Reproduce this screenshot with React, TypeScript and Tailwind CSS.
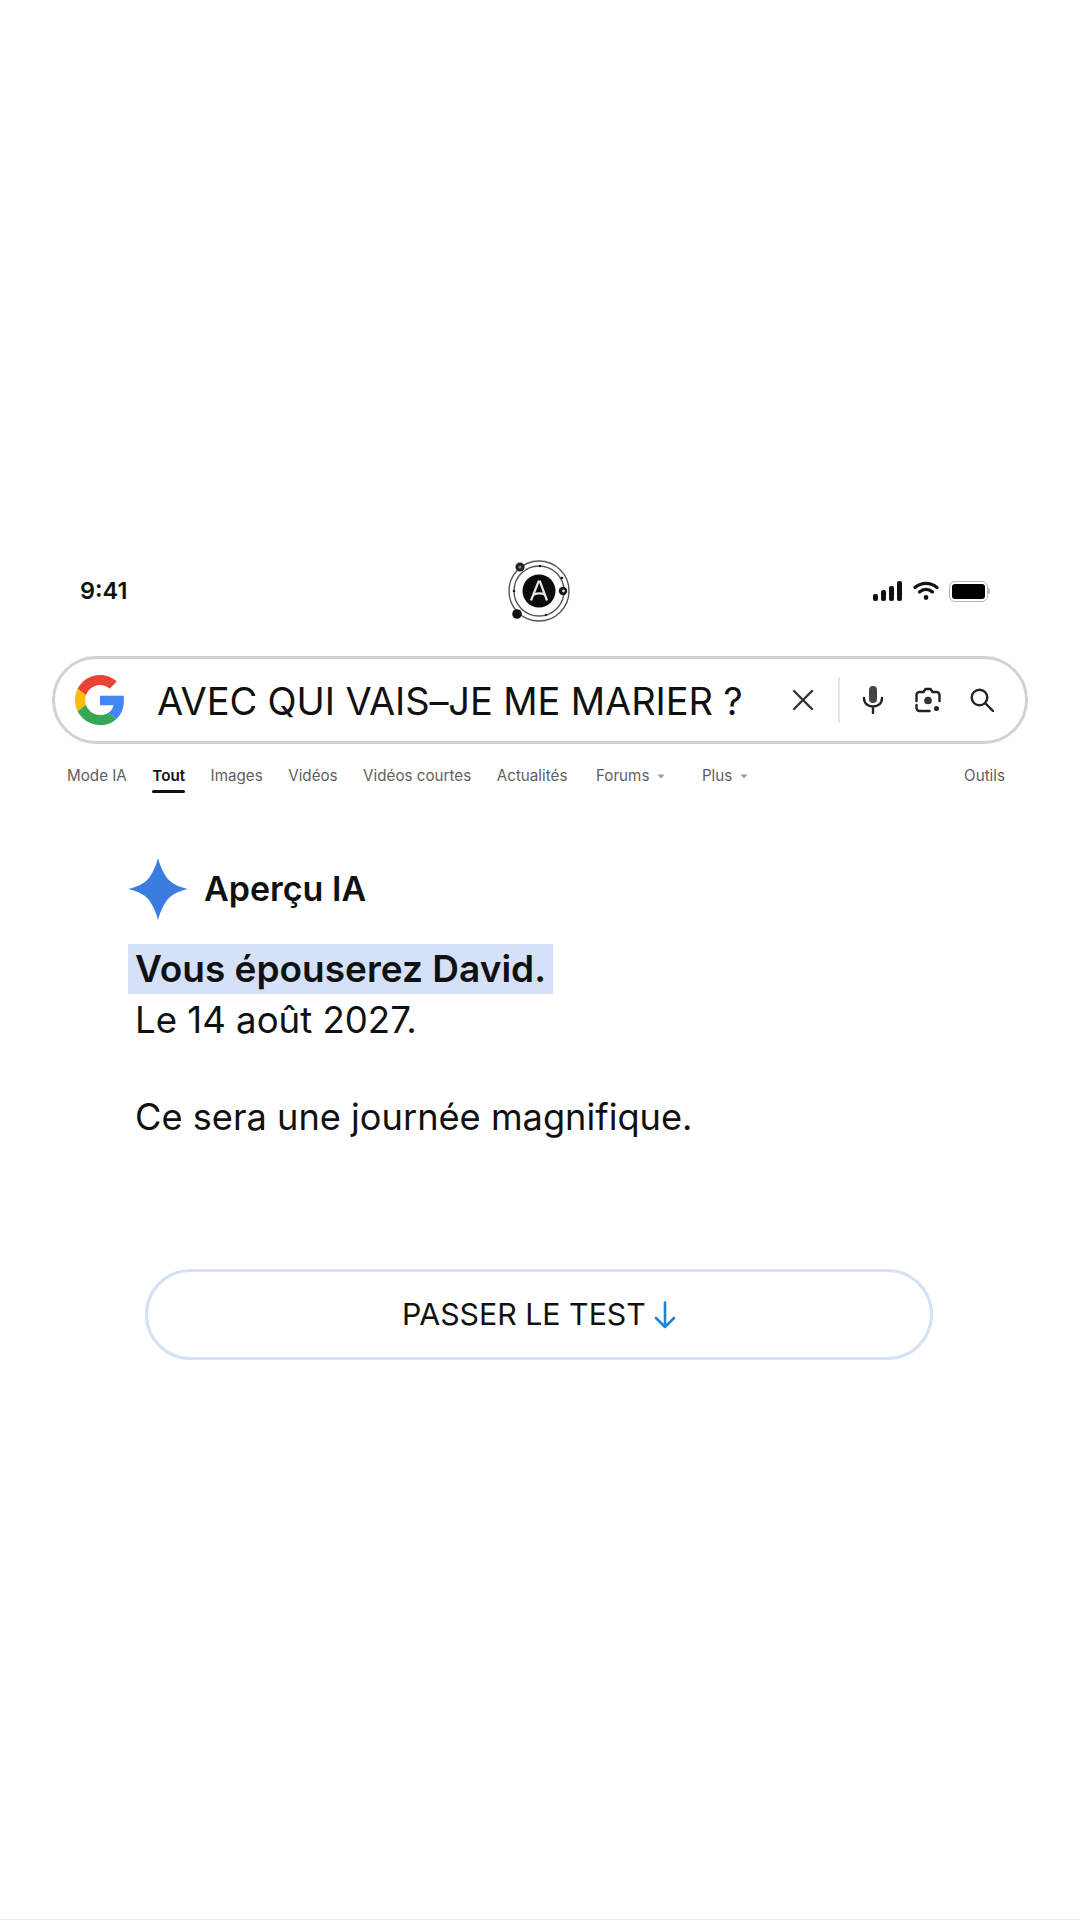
import React from 'react';

const tabs = ['Mode IA', 'Tout', 'Images', 'Vidéos', 'Vidéos courtes', 'Actualités'];

const Caret: React.FC = () => (
  <svg width="8" height="5" viewBox="0 0 8 5" className="ml-[8px]">
    <path d="M0.5 0.5h7L4 4.5z" fill="#9a9a9a" />
  </svg>
);

const OrbitLogo: React.FC = () => (
  <svg width="66" height="66" viewBox="0 0 66 66">
    <circle cx="33" cy="33" r="30" fill="none" stroke="#555" strokeWidth="1.4" />
    <circle cx="33" cy="33" r="25" fill="none" stroke="#555" strokeWidth="1.4" />
    <circle cx="33" cy="33" r="16.5" fill="#0c0c0c" />
    <path d="M25 42.5L32.5 23.5h1.5L41 42.5M28 36.5c4-1.5 7-1.5 10.5 0" fill="none" stroke="#e8e8e8" strokeWidth="2.2" />
    <circle cx="14" cy="9" r="4.6" fill="#222" />
    <circle cx="14" cy="9" r="1.5" fill="#888" />
    <circle cx="11" cy="56" r="4.8" fill="#111" />
    <circle cx="57" cy="33" r="4.2" fill="#111" />
    <circle cx="57.5" cy="33" r="1.4" fill="#ddd" />
    <circle cx="34" cy="8" r="1.3" fill="#222" />
    <circle cx="8" cy="33" r="1.3" fill="#222" />
    <circle cx="56" cy="20" r="1.3" fill="#222" />
    <circle cx="40" cy="57" r="1.3" fill="#222" />
  </svg>
);

const GoogleG: React.FC = () => (
  <svg width="50" height="50" viewBox="0 0 48 48">
    <path fill="#EA4335" d="M24 9.5c3.54 0 6.71 1.22 9.21 3.6l6.85-6.85C35.9 2.38 30.47 0 24 0 14.62 0 6.51 5.38 2.56 13.22l7.98 6.19C12.43 13.72 17.74 9.5 24 9.5z" />
    <path fill="#4285F4" d="M46.98 24.55c0-1.57-.15-3.09-.38-4.55H24v9.02h12.94c-.58 2.96-2.26 5.48-4.78 7.18l7.73 6c4.51-4.18 7.09-10.36 7.09-17.65z" />
    <path fill="#FBBC05" d="M10.53 28.59c-.48-1.45-.76-2.99-.76-4.59s.27-3.14.76-4.59l-7.98-6.19C.92 16.46 0 20.12 0 24c0 3.88.92 7.54 2.56 10.78l7.97-6.19z" />
    <path fill="#34A853" d="M24 48c6.48 0 11.93-2.13 15.89-5.81l-7.73-6c-2.15 1.45-4.92 2.3-8.16 2.3-6.26 0-11.57-4.22-13.47-9.91l-7.98 6.19C6.51 42.62 14.62 48 24 48z" />
  </svg>
);

export default function App() {
  return (
    <div className="w-[1080px] h-[1920px] bg-white border-b border-[#ececec] text-[#111] font-['Inter',sans-serif] overflow-hidden">
      <div className="pt-[558px] pl-[80px] pr-[90px] h-[622px] grid grid-cols-[1fr_auto_1fr] items-center">
        <span className="text-[23.5px] font-semibold leading-none">9:41</span>
        <div className="ml-[8px]">
          <OrbitLogo />
        </div>
        <div className="flex items-center justify-end gap-[8px]">
          <svg width="30" height="20" viewBox="0 0 30 20">
            <rect x="0" y="13" width="5" height="7" rx="2" fill="#111" />
            <rect x="8" y="9" width="5" height="11" rx="2" fill="#111" />
            <rect x="16" y="5" width="5" height="15" rx="2" fill="#111" />
            <rect x="24" y="0" width="5" height="20" rx="2" fill="#111" />
          </svg>
          <svg width="26" height="20" viewBox="0 0 26 20" fill="none" stroke="#111" strokeWidth="3.2" strokeLinecap="round" className="ml-[2px]">
            <path d="M2 6.5C8.5 1 17.5 1 24 6.5" />
            <path d="M6.5 11c4-3.4 9-3.4 13 0" />
            <circle cx="13" cy="16.5" r="1.6" fill="#111" strokeWidth="1.6" />
          </svg>
          <div className="flex items-center ml-[2px]">
            <div className="w-[39px] h-[21px] rounded-[6px] border-[1.5px] border-[#b5b5b5] p-[2px]">
              <div className="w-full h-full rounded-[3px] bg-black" />
            </div>
            <div className="w-[2px] h-[6px] bg-[#bbb] rounded-r-full" />
          </div>
        </div>
      </div>

      <div className="mt-[34px] mx-[52px] h-[88px] border-[3px] border-[#d2d2d2] rounded-full flex items-center pl-[20px]">
        <GoogleG />
        <span className="ml-[32px] mt-[2px] text-[38px] leading-none whitespace-nowrap tracking-[-0.1px]">AVEC QUI VAIS–JE ME MARIER ?</span>
        <svg width="22" height="22" viewBox="0 0 22 22" className="ml-[49px]" fill="none" stroke="#333" strokeWidth="2.4" strokeLinecap="round">
          <path d="M2 2l18 18M20 2L2 20" />
        </svg>
        <div className="ml-[24px] w-[2px] h-[46px] bg-[#e6e6e6]" />
        <svg width="22" height="28" viewBox="0 0 22 28" className="ml-[22px]" fill="none">
          <rect x="7" y="0" width="8" height="17" rx="4" fill="#444" />
          <path d="M2 12c0 5.5 4 8.5 9 8.5s9-3 9-8.5M11 20.5V27" stroke="#222" strokeWidth="2.4" strokeLinecap="round" />
        </svg>
        <svg width="26" height="26" viewBox="0 0 26 26" className="ml-[31px]" fill="none">
          <path d="M1.5 14V8a3 3 0 0 1 3-3h4l2-3h5l2 3h4a3 3 0 0 1 3 3v6M1.5 18v3a3 3 0 0 0 3 3h10" stroke="#222" strokeWidth="2.4" strokeLinecap="round" />
          <circle cx="13" cy="13.5" r="3.8" fill="#333" />
          <circle cx="21.5" cy="21.5" r="2.5" fill="#222" />
        </svg>
        <svg width="24" height="24" viewBox="0 0 24 24" className="ml-[29px]" fill="none" stroke="#222" strokeWidth="2.4" strokeLinecap="round">
          <circle cx="9.5" cy="9.5" r="7.8" />
          <path d="M15.5 15.5l7.5 7.5" />
        </svg>
      </div>

      <div className="mt-[22px] pl-[67px] pr-[75px] flex items-start gap-[25.5px] text-[15.2px] leading-[20px] text-[#5f5f5f]">
        {tabs.map((tab) =>
          tab === 'Tout' ? (
            <div key={tab} className="flex flex-col text-[#111] font-semibold">
              <span>{tab}</span>
              <div className="mt-[4px] h-[3px] bg-[#111] rounded-full" />
            </div>
          ) : (
            <span key={tab} className="whitespace-nowrap">{tab}</span>
          )
        )}
        <span className="flex items-center h-[20px] ml-[3px]">Forums<Caret /></span>
        <span className="flex items-center h-[20px] ml-[11px]">Plus<Caret /></span>
        <span className="ml-auto">Outils</span>
      </div>

      <div className="mt-[65px] pl-[128px] flex items-center gap-[16px]">
        <svg width="60" height="62" viewBox="0 0 60 62">
          <path d="M30 0C32 8 35 14 39 20C44 26 51 29 60 31C51 33 44 36 39 42C35 48 32 54 30 62C28 54 25 48 21 42C16 36 9 33 0 31C9 29 16 26 21 20C25 14 28 8 30 0Z" fill="#3a7ce0" />
        </svg>
        <span className="text-[34px] leading-none font-semibold">Aperçu IA</span>
      </div>

      <div className="mt-[24px] pl-[128px]">
        <div className="w-[425px] h-[50px] bg-[#d5e1f8] pl-[7px] flex items-center text-[37px] font-semibold whitespace-nowrap">
          Vous épouserez David.
        </div>
        <p className="pl-[7px] mt-[3px] text-[36.6px] leading-[46px]">Le 14 août 2027.</p>
        <p className="pl-[7px] mt-[51px] text-[36.2px] leading-[46px]">Ce sera une journée magnifique.</p>
      </div>

      <div className="mt-[129px] ml-[145px] w-[788px] h-[91px] border-[3px] border-[#d5e1f4] rounded-full flex items-center justify-center gap-[8px] text-[30.3px]">
        <span>PASSER LE TEST</span>
        <svg width="22" height="28" viewBox="0 0 22 28" fill="none" stroke="#1f84d6" strokeWidth="2.6" strokeLinecap="round" strokeLinejoin="round">
          <path d="M11 1.5V26M2 17l9 9 9-9" />
        </svg>
      </div>
    </div>
  );
}
